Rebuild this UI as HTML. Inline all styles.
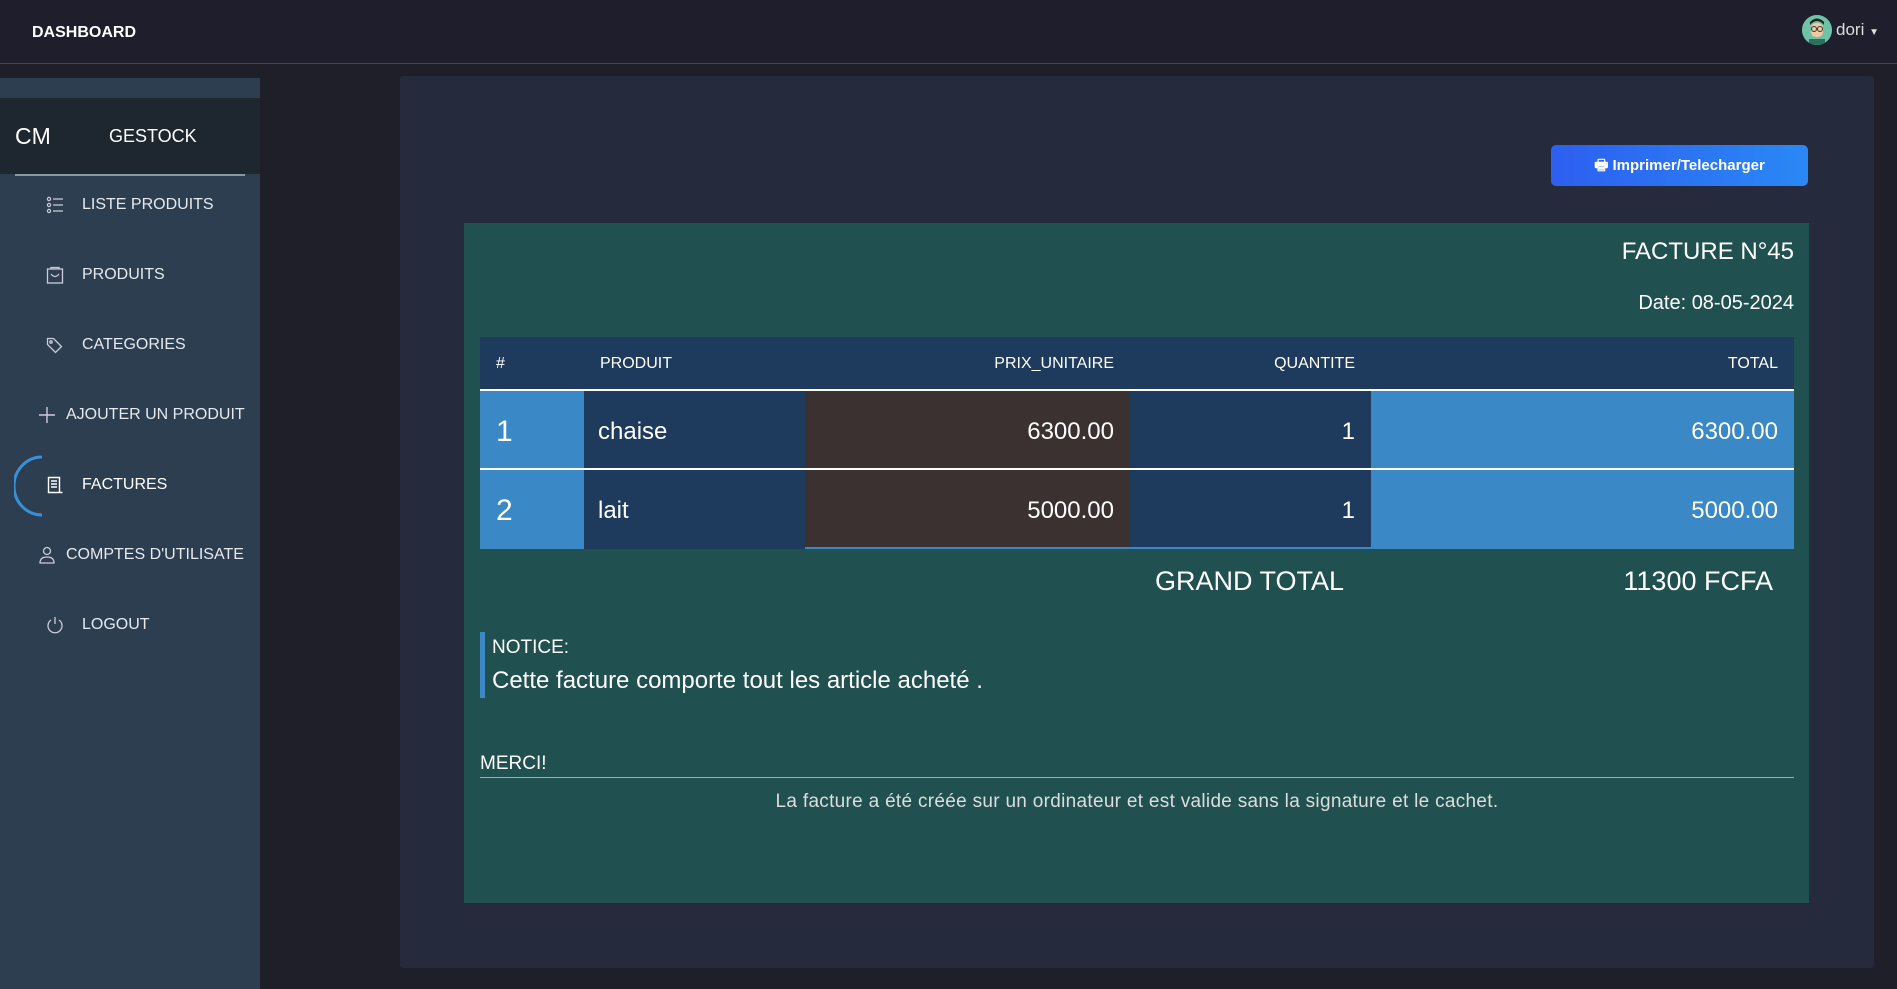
<!DOCTYPE html>
<html><head><meta charset="utf-8"><style>
*{box-sizing:border-box;margin:0;padding:0}
body{width:1897px;height:989px;background:#1e1f28;font-family:"Liberation Sans",sans-serif;color:#fff;position:relative;overflow:hidden}
.hdr{position:absolute;left:0;top:0;width:1897px;height:64px;background:#1e1e2d;border-bottom:1px solid #3a4a5e}
.hdr .t{position:absolute;left:32px;top:24px;font-weight:bold;font-size:16px}
.av{position:absolute;left:1802px;top:15px;width:30px;height:30px;border-radius:50%;background:#6fc2a6;overflow:hidden}
.dori{position:absolute;left:1836px;top:20px;font-size:17px;color:#ddd}
.side{position:absolute;left:0;top:78px;width:260px;height:911px;background:#2c3e50}
.brand{position:absolute;left:0;top:20px;width:260px;height:76px;background:#1e2630}
.brand .cm{position:absolute;left:15px;top:25px;font-size:23px}
.brand .g{position:absolute;left:109px;top:28px;font-size:18px}
.brand .ln{position:absolute;left:15px;bottom:-2px;width:230px;height:2px;background:#8a96a0}
.it{position:absolute;font-size:16px;color:#e6e9ee;left:82px}
.ic{position:absolute;left:46px}
.card{position:absolute;left:400px;top:76px;width:1474px;height:892px;background:#262a3d;border-radius:3px}
.btn{position:absolute;left:1551px;top:145px;width:257px;height:41px;border-radius:5px;background:linear-gradient(90deg,#2d5ff0,#2a88f5);font-weight:bold;font-size:15px;text-align:center;line-height:41px}
.inv{position:absolute;left:464px;top:223px;width:1345px;height:680px;background:#20504f}
.tbl{position:absolute;left:480px;top:337px;width:1314px}
.row{position:absolute;left:0;width:1314px}
.c{position:absolute;top:0;height:100%}
.txt{position:absolute;white-space:nowrap}
</style></head><body>
<div class="hdr"><div class="t">DASHBOARD</div>
<div class="av"><svg width="30" height="30"><circle cx="15" cy="15" r="15" fill="#6fc2a6"/><rect x="9" y="8" width="12" height="14" rx="5" fill="#f2c8a0"/><path d="M8 10 Q15 2 22 10 L22 7 Q15 0 8 7Z" fill="#222"/><circle cx="12" cy="14" r="2.5" fill="none" stroke="#333"/><circle cx="18" cy="14" r="2.5" fill="none" stroke="#333"/><rect x="7" y="24" width="16" height="8" fill="#2a7060"/></svg></div>
<div class="dori">dori <span style="font-size:10px">▼</span></div></div>

<div class="side">
<div class="brand"><div class="cm">CM</div><div class="g">GESTOCK</div><div class="ln"></div></div>
<svg class="ic" style="top:118px" width="18" height="18" stroke="#ccd" fill="none" stroke-width="1.2"><circle cx="3" cy="3" r="1.6"/><circle cx="3" cy="9" r="1.6"/><circle cx="3" cy="15" r="1.6"/><path d="M7 3h10M7 9h10M7 15h10"/></svg>
<div class="it" style="top:118px">LISTE PRODUITS</div>
<svg class="ic" style="top:188px" width="18" height="18" stroke="#ccd" fill="none" stroke-width="1.3"><rect x="1.5" y="3" width="15" height="14"/><path d="M5 3V1.5h8V3M5 8q4 5 8 0"/></svg>
<div class="it" style="top:188px">PRODUITS</div>
<svg class="ic" style="top:258px" width="18" height="18" stroke="#ccd" fill="none" stroke-width="1.3"><path d="M1.5 2.5v6l8 8 6-6-8-8z"/><circle cx="5" cy="6" r="1.2"/></svg>
<div class="it" style="top:258px">CATEGORIES</div>
<svg class="ic" style="top:328px;left:38px" width="18" height="18" stroke="#ccd" stroke-width="1.4"><path d="M9 1v16M1 9h16"/></svg>
<div class="it" style="top:328px;left:66px">AJOUTER UN PRODUIT</div>
<svg style="position:absolute;left:14px;top:377px" width="40" height="62"><path d="M28 2 A28 29 0 0 0 28 60" fill="none" stroke="#3a90d8" stroke-width="3"/></svg>
<svg class="ic" style="top:398px" width="18" height="18" stroke="#fff" fill="none" stroke-width="1.4"><path d="M2.5 1.5h11v15h-11zM5 5h6M5 8h6M5 11h6M2.5 16.5h14"/></svg>
<div class="it" style="top:398px;color:#fff">FACTURES</div>
<svg class="ic" style="top:468px;left:38px" width="18" height="18" stroke="#ccd" fill="none" stroke-width="1.3"><circle cx="9" cy="5" r="3.5"/><path d="M2 17q0-6 7-6t7 6z"/></svg>
<div class="it" style="top:468px;left:66px">COMPTES D'UTILISATE</div>
<svg class="ic" style="top:538px" width="18" height="18" stroke="#ccd" fill="none" stroke-width="1.3"><path d="M9 1v7M5 4a7 7 0 1 0 8 0"/></svg>
<div class="it" style="top:538px">LOGOUT</div>
</div>

<div class="card"></div>
<div class="btn">🖶 Imprimer/Telecharger</div>
<div class="inv"></div>
<div class="txt" style="right:103px;top:238px;font-size:24px">FACTURE N°45</div>
<div class="txt" style="right:103px;top:292px;font-size:20px">Date: 08-05-2024</div>

<div class="tbl">
<div class="row" style="top:0;height:54px;background:#1e3a5c;border-bottom:2px solid #fff">
<div class="txt" style="left:16px;top:18px;font-size:16px">#</div>
<div class="txt" style="left:120px;top:18px;font-size:16px">PRODUIT</div>
<div class="txt" style="right:680px;top:18px;font-size:16px">PRIX_UNITAIRE</div>
<div class="txt" style="right:439px;top:18px;font-size:16px">QUANTITE</div>
<div class="txt" style="right:16px;top:18px;font-size:16px">TOTAL</div>
</div>
<div class="row" style="top:54px;height:79px;border-bottom:2px solid #fff">
<div class="c" style="left:0;width:104px;background:#3a88c5"></div>
<div class="c" style="left:104px;width:221px;background:#1e3a5c"></div>
<div class="c" style="left:325px;width:325px;background:#3b3131"></div>
<div class="c" style="left:650px;width:241px;background:#1e3a5c"></div>
<div class="c" style="left:891px;width:423px;background:#3a88c5"></div>
<div class="txt" style="left:16px;top:24px;font-size:30px">1</div>
<div class="txt" style="left:118px;top:27px;font-size:24px">chaise</div>
<div class="txt" style="right:680px;top:27px;font-size:24px">6300.00</div>
<div class="txt" style="right:439px;top:27px;font-size:24px">1</div>
<div class="txt" style="right:16px;top:27px;font-size:24px">6300.00</div>
</div>
<div class="row" style="top:133px;height:79px">
<div class="c" style="left:0;width:104px;background:#3a88c5"></div>
<div class="c" style="left:104px;width:221px;background:#1e3a5c"></div>
<div class="c" style="left:325px;width:325px;background:#3b3131;border-bottom:2px solid #3a88c5"></div>
<div class="c" style="left:650px;width:241px;background:#1e3a5c;border-bottom:2px solid #3a88c5"></div>
<div class="c" style="left:891px;width:423px;background:#3a88c5"></div>
<div class="txt" style="left:16px;top:24px;font-size:30px">2</div>
<div class="txt" style="left:118px;top:27px;font-size:24px">lait</div>
<div class="txt" style="right:680px;top:27px;font-size:24px">5000.00</div>
<div class="txt" style="right:439px;top:27px;font-size:24px">1</div>
<div class="txt" style="right:16px;top:27px;font-size:24px">5000.00</div>
</div>
</div>

<div class="txt" style="left:1155px;top:566px;font-size:27px">GRAND TOTAL</div>
<div class="txt" style="right:124px;top:566px;font-size:27px">11300 FCFA</div>
<div style="position:absolute;left:480px;top:632px;width:5px;height:66px;background:#3a88c5"></div>
<div class="txt" style="left:492px;top:637px;font-size:19px">NOTICE:</div>
<div class="txt" style="left:492px;top:667px;font-size:24px">Cette facture comporte tout les article acheté .</div>
<div class="txt" style="left:480px;top:753px;font-size:19px">MERCI!</div>
<div style="position:absolute;left:480px;top:777px;width:1314px;height:1px;background:#aab"></div>
<div style="position:absolute;left:480px;top:791px;width:1314px;text-align:center;font-size:19px;color:#ddd;letter-spacing:0.3px">La facture a été créée sur un ordinateur et est valide sans la signature et le cachet.</div>
</body></html>
